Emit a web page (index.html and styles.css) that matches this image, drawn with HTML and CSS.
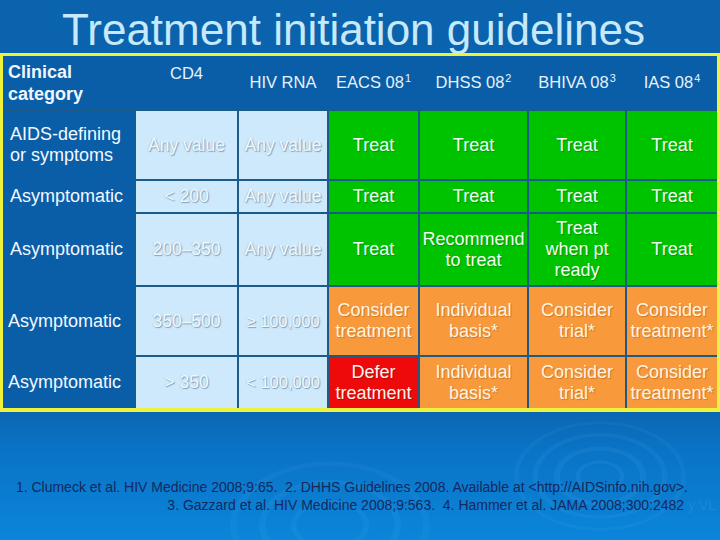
FILE: index.html
```html
<!DOCTYPE html>
<html lang="en">
<head>
<meta charset="utf-8">
<title>Treatment initiation guidelines</title>
<link rel="stylesheet" href="styles.css">
</head>
<body>
<div class="slide">
  <h1 class="title">Treatment initiation guidelines</h1>
  <div class="frame">
    <table class="grid">
      <colgroup>
        <col class="c-cat"><col class="c-cd4"><col class="c-rna"><col class="c-eacs"><col class="c-dhss"><col class="c-bhiva"><col class="c-ias">
      </colgroup>
      <thead>
        <tr class="r-head">
          <th class="cat">Clinical<br>category</th>
          <th class="hd cd4">CD4</th>
          <th class="hd">HIV RNA</th>
          <th class="hd">EACS 08<sup>1</sup></th>
          <th class="hd">DHSS 08<sup>2</sup></th>
          <th class="hd">BHIVA 08<sup>3</sup></th>
          <th class="hd">IAS 08<sup>4</sup></th>
        </tr>
      </thead>
      <tbody>
        <tr class="r1">
          <th class="lbl">AIDS-defining<br>or symptoms</th>
          <td class="lt">Any value</td>
          <td class="lt">Any value</td>
          <td class="gr">Treat</td>
          <td class="gr">Treat</td>
          <td class="gr">Treat</td>
          <td class="gr">Treat</td>
        </tr>
        <tr class="r2">
          <th class="lbl">Asymptomatic</th>
          <td class="lt">&lt; 200</td>
          <td class="lt">Any value</td>
          <td class="gr">Treat</td>
          <td class="gr">Treat</td>
          <td class="gr">Treat</td>
          <td class="gr">Treat</td>
        </tr>
        <tr class="r3">
          <th class="lbl">Asymptomatic</th>
          <td class="lt">200–350</td>
          <td class="lt">Any value</td>
          <td class="gr">Treat</td>
          <td class="gr">Recommend<br>to treat</td>
          <td class="gr">Treat<br>when pt<br>ready</td>
          <td class="gr">Treat</td>
        </tr>
        <tr class="r4">
          <th class="lbl lbl-tight">Asymptomatic</th>
          <td class="lt">350–500</td>
          <td class="lt num">≥ 100,000</td>
          <td class="or">Consider<br>treatment</td>
          <td class="or">Individual<br>basis*</td>
          <td class="or">Consider<br>trial*</td>
          <td class="or">Consider<br>treatment*</td>
        </tr>
        <tr class="r5">
          <th class="lbl lbl-tight">Asymptomatic</th>
          <td class="lt">&gt; 350</td>
          <td class="lt num">&lt; 100,000</td>
          <td class="rd">Defer<br>treatment</td>
          <td class="or">Individual<br>basis*</td>
          <td class="or">Consider<br>trial*</td>
          <td class="or">Consider<br>treatment*</td>
        </tr>
      </tbody>
    </table>
  </div>
  <div class="refs">
    <p class="ref ref-1">1. Clumeck et al. HIV Medicine 2008;9:65.&nbsp; 2. DHHS Guidelines 2008. Available at &lt;http://AIDSinfo.nih.gov&gt;.</p>
    <p class="ref ref-2">3. Gazzard et al. HIV Medicine 2008;9:563.&nbsp; 4. Hammer et al. JAMA 2008;300:2482<span class="ghost"> y VL</span></p>
  </div>
</div>
</body>
</html>
```

FILE: styles.css
```css
html, body {
  margin: 0;
  padding: 0;
}

body {
  width: 720px;
  height: 540px;
  overflow: hidden;
  font-family: "Liberation Sans", Arial, sans-serif;
  background-color: #0b64ae;
}

.slide {
  width: 720px;
  height: 540px;
  background:
    radial-gradient(ellipse 88px 56px at 600px 476px,
      transparent 0 22%,
      rgba(120, 200, 255, 0.08) 23% 27%,
      transparent 28% 45%,
      rgba(120, 200, 255, 0.08) 46% 52%,
      transparent 53% 70%,
      rgba(120, 200, 255, 0.07) 71% 76%,
      transparent 77% 92%,
      rgba(120, 200, 255, 0.06) 93% 97%,
      transparent 98%),
    radial-gradient(ellipse 110px 70px at 330px 525px,
      transparent 0 30%,
      rgba(120, 200, 255, 0.07) 31% 35%,
      transparent 36% 58%,
      rgba(120, 200, 255, 0.07) 59% 64%,
      transparent 65% 84%,
      rgba(120, 200, 255, 0.06) 85% 90%,
      transparent 91%),
    linear-gradient(#0b63ad 0, #0b65b0 405px, #0a73c6 450px, #0a86da 540px);
}

.title {
  margin: 0;
  height: 53px;
  box-sizing: border-box;
  padding: 7px 13px 0 0;
  font-size: 44px;
  line-height: 46px;
  font-weight: normal;
  text-align: center;
  color: #c6e9fb;
  white-space: nowrap;
}

.frame {
  width: 720px;
  box-sizing: border-box;
  border: 3px solid #eef23a;
  border-bottom-width: 4px;
  background: #0a5ea7;
}

.grid {
  width: 714px;
  table-layout: fixed;
  border-collapse: collapse;
  border-style: hidden;
}

.c-cat { width: 132px; }
.c-cd4 { width: 103px; }
.c-rna { width: 90px; }
.c-eacs { width: 91px; }
.c-dhss { width: 109px; }
.c-bhiva { width: 98px; }
.c-ias { width: 91px; }

.r-head { height: 54px; }
.r1 { height: 70px; }
.r2 { height: 33px; }
.r3 { height: 73px; }
.r4 { height: 70px; }
.r5 { height: 52px; }

.grid th,
.grid td {
  padding: 0 2px;
  text-align: center;
  vertical-align: middle;
  white-space: nowrap;
  border: 2px solid #1c5a8a;
}

.grid thead th {
  background: #0a5ea7;
  color: #e6f2fc;
  font-weight: normal;
  font-size: 16.5px;
  line-height: 21px;
  border-top-color: #0a5ea7;
  border-left-color: #0a5ea7;
  border-right-color: #0a5ea7;
  border-bottom-color: #1c5a8a;
}

.grid thead th.cat {
  text-align: left;
  padding-left: 5px;
  font-size: 18px;
  line-height: 22px;
  font-weight: bold;
  color: #eef6ff;
}

.grid thead th.cd4 {
  vertical-align: top;
  padding-top: 7px;
}

.grid sup {
  font-size: 0.66em;
  line-height: 0;
  vertical-align: 0.55em;
  margin-left: 1px;
}

.grid .lbl {
  background: #0a5ea7;
  color: #f3f8ff;
  font-weight: normal;
  font-size: 18px;
  line-height: 21px;
  text-align: left;
  padding-left: 7px;
  border-top-color: #0a5ea7;
  border-bottom-color: #0a5ea7;
  border-left-color: #0a5ea7;
  border-right-color: #0f5c9a;
}

.grid .lbl-tight {
  padding-left: 5px;
}

.grid td {
  font-size: 18px;
  line-height: 21px;
}

.grid .lt {
  background: #cde9fb;
  color: #eef8ff;
  font-size: 17.5px;
  text-shadow: 1px 1px 1px rgba(70, 100, 130, 0.55), -1px 0 0 rgba(150, 175, 195, 0.35);
}

.grid .lt.num {
  font-size: 16.5px;
  padding: 0;
}

.grid .gr {
  background: #00c300;
  color: #f2fff0;
  text-shadow: 1px 1px 1px rgba(0, 70, 0, 0.35);
}

.grid .or {
  background: #f8993b;
  color: #fff5e2;
  text-shadow: 1px 1px 1px rgba(120, 60, 0, 0.35);
}

.grid .rd {
  background: #ee0a0a;
  color: #fff3ec;
  text-shadow: 1px 1px 1px rgba(90, 0, 0, 0.35);
}

.refs {
  margin-top: 67px;
  color: #16285c;
  font-size: 14px;
  line-height: 17.5px;
}

.ref {
  margin: 0;
  text-align: right;
  white-space: nowrap;
}

.ref-1 {
  padding-right: 32px;
}

.ref-2 {
  padding-right: 4px;
}

.ghost {
  color: rgba(190, 225, 255, 0.1);
}
```
